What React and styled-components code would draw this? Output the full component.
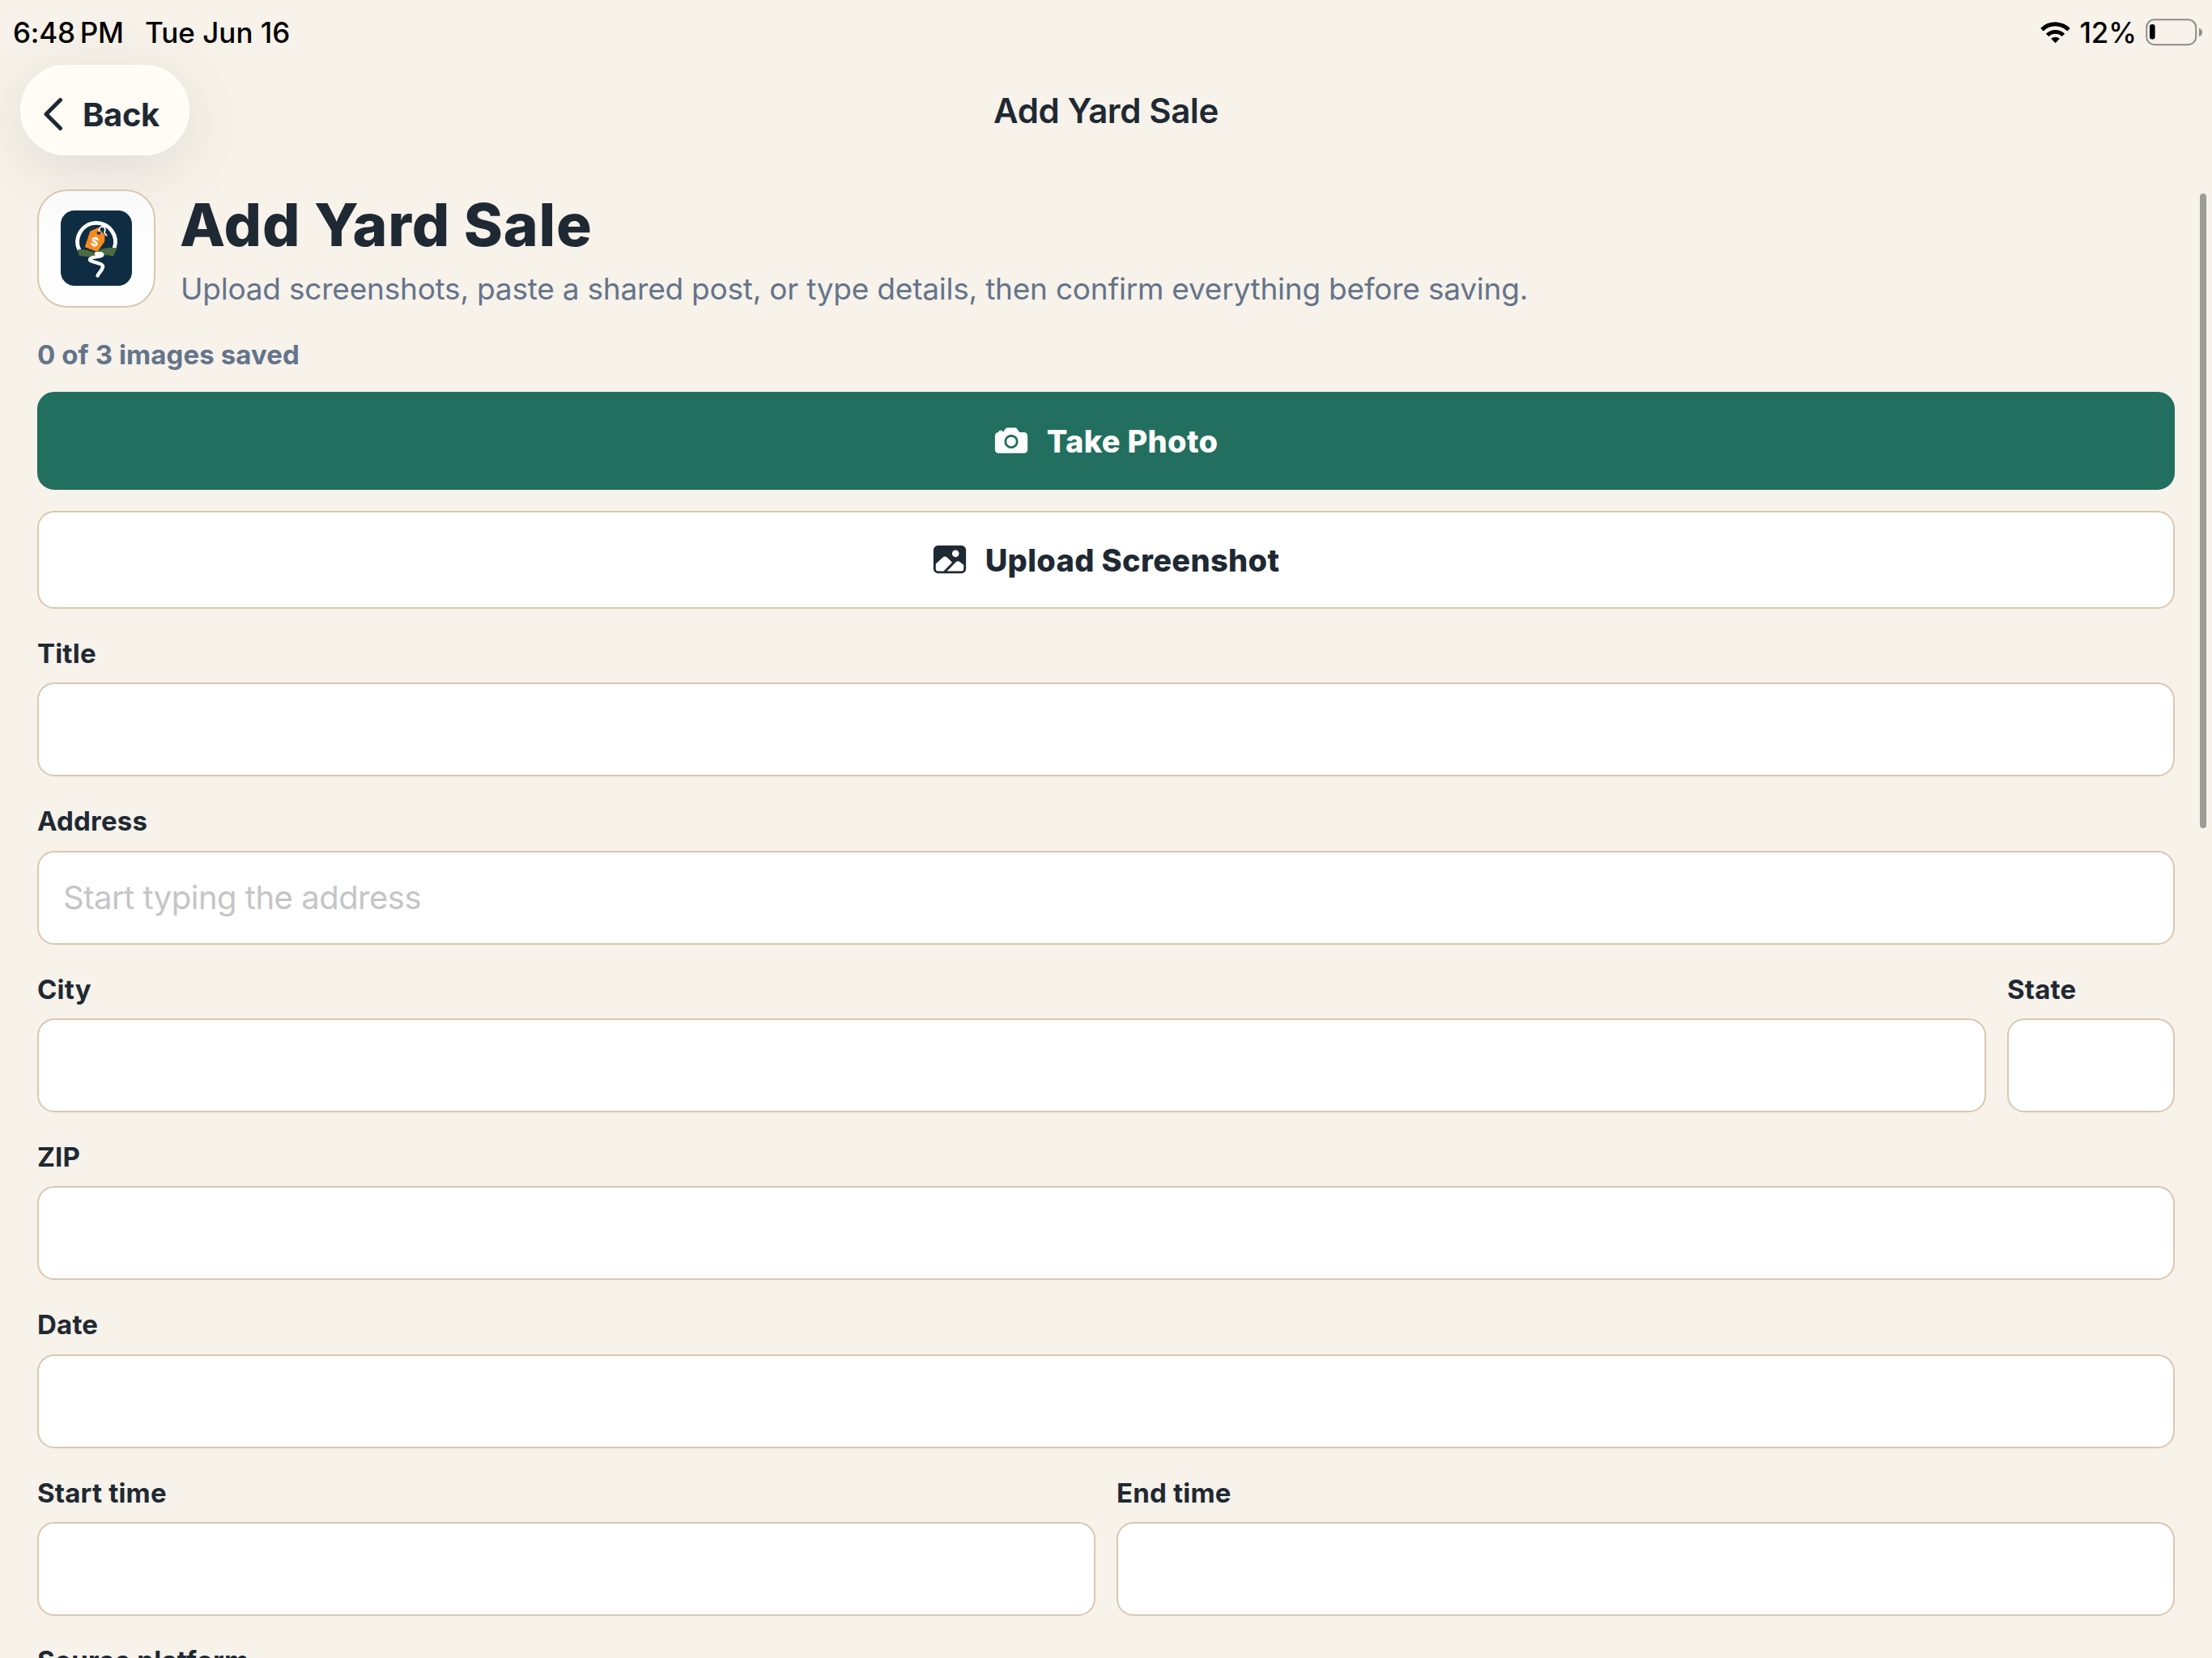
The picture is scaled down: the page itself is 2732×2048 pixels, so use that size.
import React from 'react';
import styled, { createGlobalStyle } from 'styled-components';
import { IoCamera, IoImage } from 'react-icons/io5';

const GlobalStyle = createGlobalStyle`
  * {
    box-sizing: border-box;
  }

  html, body {
    margin: 0;
    height: 2048px;
    overflow: hidden;
    background: #f7f2ea;
  }
`;

const Screen = styled.div`
  position: relative;
  display: flex;
  flex-direction: column;
  width: 2732px;
  height: 2048px;
  overflow: hidden;
  background: #f7f2ea;
  color: #1f2933;
  font-family: Inter, "Liberation Sans", sans-serif;
`;

const StatusBar = styled.div`
  display: flex;
  flex-shrink: 0;
  justify-content: space-between;
  align-items: center;
  height: 80px;
  padding: 0 11px 0 16px;
  color: #000;
  font-size: 35px;
  font-weight: 500;
`;

const StatusGroup = styled.div`
  display: flex;
  align-items: center;
  white-space: pre;
`;

const Clock = styled.span`
  width: 163px;
  letter-spacing: -0.2px;
`;

const Today = styled.span`
  letter-spacing: 0;
`;

const Percent = styled.span`
  margin: 0 11px 0 11px;
  letter-spacing: -0.1px;
`;

const NavBar = styled.header`
  display: grid;
  flex-shrink: 0;
  grid-template-columns: 1fr auto 1fr;
  align-items: start;
  height: 154px;
  padding: 0 25px;
`;

const BackButton = styled.button`
  display: flex;
  align-items: center;
  gap: 24px;
  width: 209px;
  height: 112px;
  padding: 10px 0 0 27px;
  border: 2px solid #fffefa;
  border-radius: 56px;
  background: #fffcf5;
  box-shadow: 0 16px 84px rgba(60, 60, 60, 0.13);
  color: #1f2933;
  font-family: inherit;
  font-size: 40px;
  font-weight: 700;
  letter-spacing: -0.4px;
`;

const NavTitle = styled.div`
  padding-top: 32px;
  font-size: 42px;
  line-height: 50px;
  font-weight: 560;
  letter-spacing: -0.4px;
`;

const Content = styled.main`
  display: flex;
  flex-shrink: 0;
  flex-direction: column;
  padding: 0 46px;
`;

const Hero = styled.section`
  display: flex;
  gap: 31px;
  height: 146px;
`;

const LogoTile = styled.div`
  display: flex;
  align-items: center;
  justify-content: center;
  width: 146px;
  height: 146px;
  padding-bottom: 1px;
  border: 2px solid #d8c8b0;
  border-radius: 37px;
  background: linear-gradient(#f9f9f9, #fdfdfd 40%);
`;

const Heading = styled.h1`
  margin: 0 0 0 -1px;
  font-size: 73px;
  line-height: 88px;
  font-weight: 800;
  letter-spacing: 0.8px;
`;

const Subtitle = styled.p`
  margin: 10px 0 0;
  color: #64748b;
  font-size: 37px;
  line-height: 50px;
  letter-spacing: -0.22px;
`;

const SavedCount = styled.div`
  margin-top: 38px;
  color: #64748b;
  font-size: 33px;
  line-height: 40px;
  font-weight: 700;
  letter-spacing: 0.1px;
`;

const ActionButton = styled.button`
  display: flex;
  align-items: center;
  justify-content: center;
  gap: 21px;
  height: 121px;
  margin-top: 26px;
  padding: 0 8px 0 6px;
  border: 2px solid ${({ $primary }) => ($primary ? '#226f5f' : '#d8c8b0')};
  border-radius: 21px;
  background: ${({ $primary }) => ($primary ? '#226f5f' : '#fff')};
  color: ${({ $primary }) => ($primary ? '#fff' : '#1f2933')};
  font-family: inherit;
  font-size: 38px;
  font-weight: 800;
  letter-spacing: 0.35px;

  svg {
    width: 46px;
    height: 46px;
    margin-top: -1px;
  }
`;

const Fields = styled.div`
  display: flex;
  flex-direction: column;
  margin-top: 36px;
`;

const FieldRow = styled.div`
  display: grid;
  grid-template-columns: ${({ $columns }) => $columns || '1fr'};
  column-gap: 26px;
  height: 207.35px;
`;

const Label = styled.label`
  display: flex;
  flex-direction: column;
  gap: 16.4px;
  font-size: 33px;
  line-height: 39px;
  font-weight: 700;
  letter-spacing: 0.2px;
`;

const Input = styled.input`
  width: 100%;
  height: 116px;
  padding: 0 30px;
  border: 2px solid #d8c8b0;
  border-radius: 21px;
  background: #fff;
  font-family: inherit;
  font-size: 40px;
  letter-spacing: -0.5px;

  &::placeholder {
    color: #c5c5c7;
    opacity: 1;
  }
`;

const ScrollThumb = styled.div`
  position: absolute;
  top: 239px;
  right: 7px;
  width: 8px;
  height: 784px;
  border-radius: 4px;
  background: #9d9d97;
`;

const WifiIcon = () => (
  <svg width="37" height="27" viewBox="0 0 37 27" fill="none" stroke="#000">
    <path d="M2 9.6a23.6 23.6 0 0 1 33 0" strokeWidth="5" />
    <path d="M8.6 16.4a14 14 0 0 1 19.8 0" strokeWidth="4.8" />
    <path d="M18.5 26.2l-5.3-5.4a7.6 7.6 0 0 1 10.6 0z" fill="#000" stroke="none" />
  </svg>
);

const BatteryIcon = () => (
  <svg width="71" height="34" viewBox="0 0 71 34">
    <rect x="1.2" y="1.2" width="61" height="31" rx="9.5" fill="none" stroke="#8f8c87" strokeWidth="2" />
    <rect x="5" y="7" width="6.6" height="18.5" rx="3" fill="#000" />
    <path d="M66 11.5c2.4 1 4 3 4 5.4s-1.6 4.4-4 5.4z" fill="#8f8c87" />
  </svg>
);

const ChevronIcon = () => (
  <svg width="24" height="42" viewBox="0 0 24 42" fill="none" stroke="#1f2933" strokeWidth="5" strokeLinecap="round" strokeLinejoin="round">
    <path d="M20.5 3.5L3 21l17.5 17.5" />
  </svg>
);

const AppLogo = () => (
  <svg width="88" height="93" viewBox="0 0 88 93">
    <rect width="88" height="93" rx="17" fill="#0f2d42" />
    {/* ring around the tag */}
    <path d="M23 49A23.4 23.4 0 1 1 66 47" fill="none" stroke="#fff" strokeWidth="4.8" />
    {/* price tag */}
    <path d="M37 26.5L46 22.5l7.5 8.500-.3 7-8.200 12L31 44.500z" fill="#f58a1f" stroke="#f58a1f" strokeWidth="2" strokeLinejoin="round" />
    <circle cx="47" cy="27.5" r="2.3" fill="#0f2d42" />
    <path d="M47.5 26.5c-1-4 1.5-7 4.500-6.500s3.500 4 2 6.500c-.3 2.500 2 2.500 2.800 5" fill="none" stroke="#fff" strokeWidth="1.8" />
    <text x="42" y="44.2" textAnchor="middle" transform="rotate(14 42 39)" fill="#fff" fontSize="15" fontWeight="700" fontFamily="Inter, sans-serif">$</text>
    {/* hills and road */}
    <path d="M21 48c7 0 13 .5 20 4 7-4 15-7 28.500-5.700L65 56.500c-7-2-14-1.500-22.500 0-7 .8-13 .3-19.800-.7z" fill="#4c6b40" />
    <path d="M44 53.2c5-.4 8.500.3 7 2.300s-14.500 1.500-15 5 16 4 16 8.500-4.500 7-6.500 11.500" fill="none" stroke="#fff" strokeWidth="4.4" strokeLinecap="round" strokeLinejoin="round" />
  </svg>
);

const rows = [
  { fields: [{ label: 'Title' }] },
  { fields: [{ label: 'Address', placeholder: 'Start typing the address' }] },
  { fields: [{ label: 'City' }, { label: 'State' }], columns: '1fr 207px' },
  { fields: [{ label: 'ZIP' }] },
  { fields: [{ label: 'Date' }] },
  { fields: [{ label: 'Start time' }, { label: 'End time' }], columns: '1fr 1fr' },
  { fields: [{ label: 'Source platform' }] },
];

const App = () => {
  return (
    <>
      <GlobalStyle />
      <Screen>
        <StatusBar>
          <StatusGroup>
            <Clock>6:48{'\u2009'}PM</Clock>
            <Today>Tue Jun 16</Today>
          </StatusGroup>
          <StatusGroup>
            <WifiIcon />
            <Percent>12%</Percent>
            <BatteryIcon />
          </StatusGroup>
        </StatusBar>
        <NavBar>
          <BackButton>
            <ChevronIcon />
            Back
          </BackButton>
          <NavTitle>Add Yard Sale</NavTitle>
        </NavBar>
        <Content>
          <Hero>
            <LogoTile>
              <AppLogo />
            </LogoTile>
            <div>
              <Heading>Add Yard Sale</Heading>
              <Subtitle>
                Upload screenshots, paste a shared post, or type details, then confirm everything before saving.
              </Subtitle>
            </div>
          </Hero>
          <SavedCount>0 of 3 images saved</SavedCount>
          <ActionButton $primary>
            <IoCamera />
            Take Photo
          </ActionButton>
          <ActionButton>
            <IoImage />
            Upload Screenshot
          </ActionButton>
          <Fields>
            {rows.map(({ fields, columns }) => (
              <FieldRow key={fields[0].label} $columns={columns}>
                {fields.map(({ label, placeholder }) => (
                  <Label key={label}>
                    {label}
                    <Input placeholder={placeholder} />
                  </Label>
                ))}
              </FieldRow>
            ))}
          </Fields>
        </Content>
        <ScrollThumb />
      </Screen>
    </>
  );
};

export default App;
